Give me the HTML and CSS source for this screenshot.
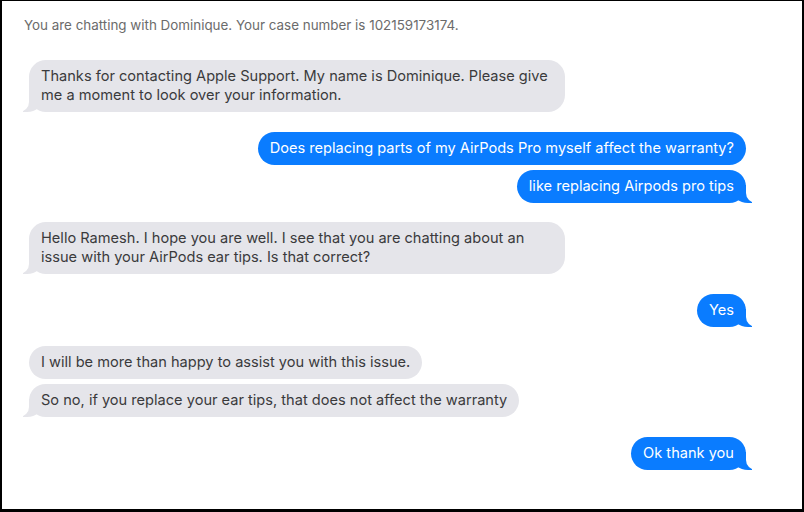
FILE: index.html
```html
<!DOCTYPE html>
<html lang="en">
<head>
    <meta charset="UTF-8">
    <meta name="viewport" content="width=device-width, initial-scale=1.0">
    <title>Chat with Apple Support</title>
    <link rel="stylesheet" href="styles.css">
</head>
<body>
    <div class="ventana">
        <p class="aviso">You are chatting with Dominique. Your case number is 102159173174.</p>

        <div class="conversacion">
            <div class="grupo ellos">
                <div class="burbuja cola">Thanks for contacting Apple Support. My name is Dominique. Please give me a moment to look over your information.</div>
            </div>

            <div class="grupo yo">
                <div class="burbuja">Does replacing parts of my AirPods Pro myself affect the warranty?</div>
                <div class="burbuja cola">like replacing Airpods pro tips</div>
            </div>

            <div class="grupo ellos">
                <div class="burbuja cola">Hello Ramesh. I hope you are well. I see that you are chatting about an issue with your AirPods ear tips. Is that correct?</div>
            </div>

            <div class="grupo yo">
                <div class="burbuja cola">Yes</div>
            </div>

            <div class="grupo ellos">
                <div class="burbuja">I will be more than happy to assist you with this issue.</div>
                <div class="burbuja cola">So no, if you replace your ear tips, that does not affect the warranty</div>
            </div>

            <div class="grupo yo">
                <div class="burbuja cola">Ok thank you</div>
            </div>
        </div>
    </div>
</body>
</html>
```

FILE: styles.css
```css
body {
    margin: 0;
    background-color: white;
    font-family: Inter, "Liberation Sans", sans-serif;
}
.ventana {
    box-sizing: border-box;
    height: 512px;
    border: solid black;
    border-width: 1px 2px 3px 2px;
    padding: 0 56px 0 27px;
}
.aviso {
    margin: 15px 0 0 -5px;
    font-size: 13.4px;
    line-height: 18px;
    color: #6b6b6b;
}
.conversacion {
    display: flex;
    flex-direction: column;
    gap: 19.6px;
    margin-top: 26px;
}
.grupo {
    display: flex;
    flex-direction: column;
    gap: 5px;
}
.grupo.ellos {
    align-items: flex-start;
}
.grupo.yo {
    align-items: flex-end;
}
.burbuja {
    position: relative;
    z-index: 0;
    max-width: 512px;
    padding: 7px 12px;
    border-radius: 17px;
    font-size: 14.6px;
    line-height: 19px;
}
.ellos .burbuja {
    background-color: #e5e5ea;
    color: #3a3a3c;
}
.yo .burbuja {
    background-color: #0a7cff;
    color: white;
}
/* colita de la burbuja */
.burbuja.cola::before,
.burbuja.cola::after {
    content: "";
    position: absolute;
    z-index: -1;
    bottom: 0;
    height: 18px;
}
.yo .cola::before {
    right: -6px;
    width: 20px;
    background-color: #0a7cff;
    border-bottom-left-radius: 16px 14px;
}
.yo .cola::after {
    right: -20px;
    width: 20px;
    background-color: white;
    border-bottom-left-radius: 10px;
}
.ellos .cola::before {
    left: -6px;
    width: 20px;
    background-color: #e5e5ea;
    border-bottom-right-radius: 16px 14px;
}
.ellos .cola::after {
    left: -20px;
    width: 20px;
    background-color: white;
    border-bottom-right-radius: 10px;
}
```
